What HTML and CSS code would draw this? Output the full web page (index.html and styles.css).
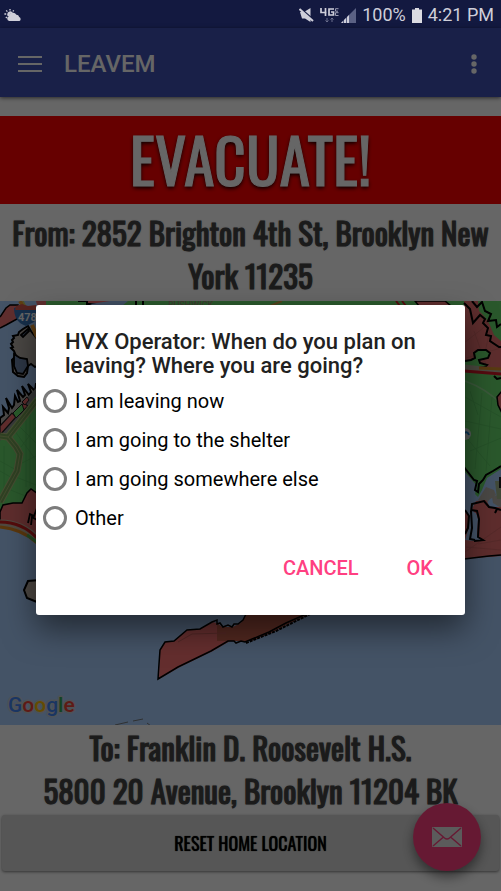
FILE: index.html
```html
<!DOCTYPE html>
<html lang="en">
<head>
<meta charset="utf-8">
<meta name="viewport" content="width=device-width, initial-scale=1">
<title>LEAVEM</title>
<link rel="stylesheet" href="styles.css">
</head>
<body>
<header class="status">
  <svg class="status-weather" viewBox="0 0 18 14" width="18" height="14" aria-hidden="true">
    <g stroke="#cfcfda" stroke-width="1.3" fill="none">
      <path d="M6 1v1.6M2.2 2.4l1.2 1.2M.4 6h1.8M1.8 10l1.2-1M9.8 2.4L8.8 3.4"/>
    </g>
    <path fill="#cfcfda" d="M3.2 6.2a3 3 0 0 1 5.6-1.4C6.500 5 5.400 6.500 5.300 8.400L4 8.500A3 3 0 0 1 3.200 6.200z"/>
    <path fill="#cfcfda" d="M5.200 13a2.300 2.300 0 0 1-.3-4.500 4 4 0 0 1 7.500-1.700 3 3 0 0 1 2.800 2.200A2.200 2.200 0 0 1 15.500 13z"/>
  </svg>
  <div class="status-right">
    <svg viewBox="0 0 15 14" width="15" height="14" aria-hidden="true">
      <path fill="#cfcfda" d="M1 4h4L11.500 0v14L6 10.500H3z"/>
      <path d="M2 1L14 11.500" stroke="#131940" stroke-width="2"/>
      <path d="M.5 1L14 13" stroke="#cfcfda" stroke-width="2"/>
    </svg>
    <svg class="status-net" viewBox="0 0 19 15" width="19" height="15" aria-hidden="true">
      <g fill="none" stroke="#cfcfda" stroke-width="1.700">
        <path d="M1 0v4.500h5.500M5.500 0v8M14 1H9v6h4.500V4H11"/>
      </g>
      <path d="M18.500 .7h-3v2.500h2.500M18.500 4.700h-3v2.800h3" fill="none" stroke="#9a9cb2"/>
      <path d="M7 10v4M5.500 12.500L7 14l1.500-1.500M12 14v-4M10.500 11.500L12 10l1.500 1.500" fill="none" stroke="#6a6e8c"/>
    </svg>
    <svg viewBox="0 0 15 15" width="15" height="15" aria-hidden="true">
      <path fill="#5b6184" d="M15 0v15H0z"/>
      <path fill="#cfcfda" d="M0 15l2-2v2zM3 12l2-2v5H3zM6 9l2-2v8H6z"/>
    </svg>
    <span>100%</span>
    <svg viewBox="0 0 10 15" width="10" height="15" aria-hidden="true"><path fill="#dcdce2" d="M3 0h4v1.500h3V15H0V1.500h3z"/></svg>
    <span>4:21 PM</span>
  </div>
</header>
<div class="screen">
  <nav class="toolbar">
    <button class="icon-button" type="button" aria-label="Menu">
      <svg viewBox="0 0 24 16" width="24" height="16"><path d="M0 1h24M0 8h24M0 15h24" stroke="#fff" stroke-width="2"/></svg>
    </button>
    <h1>LEAVEM</h1>
    <button class="icon-button" type="button" aria-label="More options">
      <svg viewBox="0 0 6 20" width="6" height="20" fill="#fff"><circle cx="3" cy="3" r="2.700"/><circle cx="3" cy="10" r="2.700"/><circle cx="3" cy="17" r="2.700"/></svg>
    </button>
  </nav>
  <main class="content">
    <p class="banner">EVACUATE!</p>
    <p class="place place-from">From: 2852 Brighton 4th St, Brooklyn New York 11235</p>
    <div class="map">
      <svg viewBox="0 0 501 424" preserveAspectRatio="xMidYMid slice" role="img" aria-label="Evacuation zone map">
        <rect width="501" height="424" fill="#abcfff"/>
        <path d="M42 0H501V6H42z" fill="#69dd6e"/>
        <path d="M78 0h9v3h22l15-3M136 0v5M143 0v5" stroke="#000" stroke-width="2" fill="#fa7070"/>
        <path d="M90 3l20-3h18l-6 5H94z" fill="#9fc3f5"/>
        <text x="168" y="7" font-size="9" fill="#a7887b">BUSHWICK</text>
        <path d="M270 5l12-5" stroke="#d8a347" stroke-width="2"/>
        <path d="M396 0l4 5M402 0l4 5" stroke="#d61b28" stroke-width="2"/>
        <path d="M415 0h30l6 5h-32z" fill="#ee7474" stroke="#000" stroke-width="1.500"/>
        <!-- western shore -->
        <path d="M0 16L6 7l4-3 8 0-1 14L6 24 0 27" fill="#ee7474" stroke="#000" stroke-width="1.500"/>
        <path d="M36 0h10v8H38z" fill="#ee7474"/>
        <path d="M12 39l2-2-1-2 5-1 1-3 4-3 5-3 3 5 3 4 4 5v26l-3 1-4-3-3 2-1 7-3 4-6-1-5-4-1-12 4-4-2-5-3-3 2-1-2-3 2-2z" fill="#bcb3ad" stroke="#000" stroke-width="2"/>
        <path d="M21 34l7-6 1 2-6 6zM14 53l6 4 7 1 1 7-5 8-6-1-3-7z" fill="#7189b0" stroke="#000" stroke-width="1.800"/>
        <path d="M20 0l5 8M32 24l5 12" stroke="#ee9c2e" stroke-width="4"/>
        <path d="M23 0l4 8" stroke="#c6d063" stroke-width="1.500"/>
        <path d="M0 117l4-3-1-8 5 6 1-5-3-10 6 10 2-3 1-9 3 6 2-1-3-11 6 7 2-2-3-9 7 9 2-3-3-8 7 7 1-8v35L0 138z" fill="#b9b4b0" stroke="#000" stroke-width="2"/>
        <path d="M0 127L36 87v18L0 143z" fill="#8d8f91"/>
        <path d="M0 125l12-13 4 4L0 134zM17 110l7-8 4 3-8 8z" fill="#f07272" stroke="#222" stroke-width="1.200"/>
        <path d="M13 112l9-9 2 6-8 8z" fill="#69e56e" stroke="#222"/>
        <path d="M22 101l5-5 2 3-4 5z" fill="#f07272" stroke="#222"/>
        <path d="M0 140L37 94v102L0 211z" fill="#69dd6e"/>
        <g stroke="#5cc763" stroke-width=".8" fill="none"><path d="M18 124l18 18M14 129l22 30M21 146l15-20M20 163l16-8M16 176l20 8M8 188l20 8M26 116v70M30 110v75M0 160l18 10M0 170l14 8M4 145v43"/></g>
        <path d="M37 99L23 117 8 136l-8-1M8 136l8 10 4 7-3 17L0 201" fill="none" stroke="#b0bd7c" stroke-width="7"/>
        <path d="M37 99L23 117 8 136l-8-1M8 136l8 10 4 7-3 17L0 201" fill="none" stroke="#77a458" stroke-width="5"/>
        <path d="M37 99L23 117 8 136l-8-1M8 136l8 10 4 7-3 17L0 201" fill="none" stroke="#a5b972"/>
        <path d="M0 211l3-7 10-2h9l5-10 4-4 7 5v44l-11-7-15-6-12-3z" fill="#ea7070" stroke="#000" stroke-width="1.500"/>
        <path d="M28 222l2-9 4 2 3-8M31 224l1-8 5 3" fill="none" stroke="#000" stroke-width="1.800"/>
        <path d="M0 222q22 0 37 16" fill="none" stroke="#c5b6a1" stroke-width="7"/>
        <path d="M0 221q22 0 37 16" fill="none" stroke="#d22020" stroke-width="3"/>
        <path d="M0 226q22 2 37 16" fill="none" stroke="#e18b22" stroke-width="3"/>
        <path d="M27 234l10 7" stroke="#59b956" stroke-width="3"/>
        <path d="M40 279l-12 1-4 9 3 8 10 4" fill="#c0b4a7" stroke="#000" stroke-width="2"/>
        <path d="M14 7l8-3 7 3 8-2q3 10-3 16l-8 4q-12-4-12-18z" fill="#3875bc"/>
        <path d="M16 5l6-2 6 2 8-1v5H15z" fill="#d8584f"/>
        <text x="18" y="20" font-size="11" font-weight="700" fill="#fff">478</text>
        <!-- eastern shore -->
        <path d="M464 0h37v68l-37-1z" fill="#e87272"/>
        <g stroke="#cf6664" stroke-width=".8" fill="none"><path d="M464 42l28-22M466 57l35-10M474 30l12 34M490 28l-8 38"/></g>
        <path d="M478 0h23v40l-7-6-5-12-5-7-5-5z" fill="#69dd6e"/>
        <path d="M464 2l6 6 3 14 7-8 5 4-2 4 5 5-2 7 5 1-1 5 9 6h2M472 0l5 6 5-5 3 9 6 3-3 7 8-1 1 7 4-3" fill="none" stroke="#000" stroke-width="2"/>
        <path d="M465 60l6-1 4-2-1-5 4-3 8 0 4 3-2 5-9 2 1 3 7 2-2 2-20 1" fill="#69dd6e" stroke="#000" stroke-width="2"/>
        <path d="M464 70h37v98l-14 9-5 12-4 7-3-3 2-8-13-15z" fill="#69dd6e"/>
        <path d="M465 80q22 8 36 23" fill="none" stroke="#94dd93" stroke-width="1.500"/>
        <g stroke="#5cc763" stroke-width=".8" fill="none"><path d="M465 96l36 20M465 120l36 8M470 150l31-13M482 92l-7 76M492 96l-6 74M465 135l25 30M470 90l8 24"/></g>
        <path d="M464 166l10 13 3 1-2 9 3 2 1-8 4-4 3-5 7-4 8-5" fill="none" stroke="#000" stroke-width="2"/>
        <path d="M464 67l37 4" stroke="#bcb39f" stroke-width="7"/>
        <path d="M479 67l22 1" stroke="#dd922c" stroke-width="3"/>
        <path d="M464 70l37 3" stroke="#d61b28" stroke-width="3"/>
        <path d="M494 75l3 3 4-1" fill="none" stroke="#000" stroke-width="2"/>
        <path d="M502 90l-5 6 1 8 4 8" fill="#e87272" stroke="#000" stroke-width="1.500"/>
        <circle cx="465" cy="133" r="6" fill="#dbe3e4"/><path d="M463 133q4-4 6 1" stroke="#1682d1" stroke-width="2" fill="none"/>
        <path d="M478 199l8-13 8 3 2 5-7 5-3 5zM492 196l9-3v14l-8-5z" fill="#b8b5ad"/>
        <path d="M495 180h6v18h-4z" fill="#a3b68e"/><path d="M500 176v11" stroke="#222" stroke-width="2"/>
        <path d="M464 257v-47l5 5v11l-4 13 9 1 9-1-7-5 1-19-5-7 4-8 10-1 4 7h11v50z" fill="#ea7070"/>
        <path d="M471 211l5 1 2 6-1 17 1 4-8-1-1-12z" fill="#abcfff"/>
        <g stroke="#cf6664" stroke-width=".8" fill="none"><path d="M465 251l36-25M478 243l23-4M466 246l35 3"/></g>
        <path d="M465 209l4 6-1 12-3 6M471 211l1-8 12-3 5 6 6 1 6 2M471 209l6 1 2 8-1 18 5 3-9 1M471 210l1 17-2 11 5 1M497 208l-2 4" fill="none" stroke="#000" stroke-width="2"/>
        <path d="M464 259l25-3 12-1v10h-37z" fill="#abcfff"/>
        <path d="M464 258l25-3 12-1" fill="none" stroke="#000" stroke-width="1.500"/>
        <!-- southern peninsula -->
        <path d="M159 378l1-29 5-8 9-1 13-11 13-1 13-7 4 1 5 4 11 0 8-4 5-8h62l-18 8-17 9-22 9h-21l-17 10-33 16z" fill="#fa7374"/>
        <path d="M217 322l5 4h11l8-4 5-8h62l-18 8-17 9-22 9h-34z" fill="#ce6452"/>
        <path d="M178 341l14-8 34-1" fill="none" stroke="#cc625e"/>
        <path d="M246 313l-3 6-5 4-4 0-2 3-4-2-5 2-3-4-3 1 0-4-5 2-12 7-13 1-13 11-9 1-5 8-1 14-1 15 20-12 33-16 17-10h6l2 2 5-2 4 1 24-10 17-9 18-8 18-7" fill="none" stroke="#000" stroke-width="1.500"/>
        <path d="M246 342l30-12 34-17" fill="none" stroke="#000" stroke-width="2" stroke-dasharray="3 1"/>
        <path d="M115 424l13-3M133 420l10-2M147 422l4 3" stroke="#777a7d"/>
        <text class="map-credit" x="8" y="411"><tspan fill="#4285f4">G</tspan><tspan fill="#ea4335">o</tspan><tspan fill="#fbbc05">o</tspan><tspan fill="#4285f4">g</tspan><tspan fill="#34a853">l</tspan><tspan fill="#ea4335">e</tspan></text>
      </svg>
    </div>
    <p class="place place-to">To: Franklin D. Roosevelt H.S.<br>5800 20 Avenue, Brooklyn 11204 BK</p>
    <button class="reset" type="button">RESET HOME LOCATION</button>
  </main>
  <button class="fab" type="button" aria-label="Send message">
    <svg viewBox="0 0 30 20" width="30" height="20">
      <rect width="30" height="20" rx="1" fill="#e4e4e4"/>
      <path d="M1 1l11.500 10q2.500 2 5 0L29 1M1 19l10.500-9M29 19l-10.500-9" fill="none" stroke="#ff4081" stroke-width="1.500"/>
    </svg>
  </button>
  <div class="scrim">
    <form class="dialog" role="dialog" aria-labelledby="question">
      <h2 id="question">HVX Operator: When do you plan on leaving? Where you are going?</h2>
      <label class="option"><input type="radio" name="plan">I am leaving now</label>
      <label class="option"><input type="radio" name="plan">I am going to the shelter</label>
      <label class="option"><input type="radio" name="plan">I am going somewhere else</label>
      <label class="option"><input type="radio" name="plan">Other</label>
      <div class="actions">
        <button type="button">CANCEL</button>
        <button type="button">OK</button>
      </div>
    </form>
  </div>
</div>
</body>
</html>
```
FILE: styles.css
```css
* {
  box-sizing: border-box;
}

body {
  margin: 0;
  min-height: 100vh;
  display: flex;
  flex-direction: column;
  font-family: Roboto, "Liberation Sans", sans-serif;
  background: #fff;
}

h1, h2, p {
  margin: 0;
}

button {
  border: 0;
  padding: 0;
  background: none;
  font-family: inherit;
}

svg {
  display: block;
}

.status {
  display: flex;
  align-items: center;
  justify-content: space-between;
  height: 28px;
  padding: 2px 7px 0 4px;
  background: #131940;
  color: #cfcfda;
  font-size: 18px;
}

.status-right {
  display: flex;
  align-items: center;
  gap: 6px;
}

.status-right span {
  line-height: 24px;
}

.status-net {
  margin-right: -4px;
}

.screen {
  position: relative;
  flex: 1;
  display: flex;
  flex-direction: column;
}

.toolbar {
  display: flex;
  align-items: center;
  height: 69px;
  padding: 2px 24px 0 18px;
  background: #3f51b5;
  color: #fff;
  box-shadow: 0 1px 4px rgba(0, 0, 0, 0.6);
}

.toolbar h1 {
  flex: 1;
  margin-left: 22px;
  font-size: 24px;
  font-weight: 500;
}

.content {
  flex: 1;
  display: flex;
  flex-direction: column;
  padding: 19px 0 20px;
}

.banner,
.place,
.reset {
  font-family: Oswald, "Liberation Sans Narrow", "Roboto Condensed", "Liberation Sans", sans-serif;
  font-weight: 400;
  text-align: center;
}

.banner {
  padding-bottom: 4px;
  background: #f00;
  color: #fff;
  font-size: 62px;
  line-height: 84px;
  text-shadow: 0 2px 4px #000;
  -webkit-text-stroke: 1px #fff;
}

.place {
  color: #444;
  font-size: 31px;
  line-height: 43px;
  text-shadow: 0 0 2px rgba(0, 0, 0, 0.5);
  -webkit-text-stroke: 1px #444;
}

.place-from {
  padding: 7px 8px 4px;
}

.place-to {
  padding: 1px 8px 3px;
}

.map {
  position: relative;
  flex: 1;
  min-height: 240px;
}

.map svg {
  position: absolute;
  inset: 0;
  width: 100%;
  height: 100%;
}

.map-credit {
  font-size: 21px;
  font-weight: 500;
  stroke: #c4ccd6;
  stroke-width: 3px;
  stroke-linejoin: round;
  paint-order: stroke;
}

.reset {
  height: 56px;
  margin: 0 2px;
  border-radius: 3px;
  background: #d7d7d7;
  color: #000;
  font-size: 18px;
  text-shadow: 0 0 1px #000;
  box-shadow: 0 1px 3px rgba(0, 0, 0, 0.5);
}

.fab {
  position: absolute;
  right: 20px;
  bottom: 20px;
  display: grid;
  place-items: center;
  width: 68px;
  height: 68px;
  border-radius: 50%;
  background: #ff4081;
  box-shadow: 0 6px 12px rgba(0, 0, 0, 0.45);
}

.scrim {
  position: absolute;
  inset: 0;
  display: grid;
  align-items: center;
  padding: 0 36px;
  background: rgba(0, 0, 0, 0.6);
}

.dialog {
  padding: 25px 24px 23px 7px;
  border-radius: 3px;
  background: #fff;
  box-shadow: 0 14px 32px rgba(0, 0, 0, 0.5);
}

.dialog h2 {
  margin-left: 22px;
  padding-bottom: 4px;
  color: #212121;
  font-size: 22px;
  font-weight: 500;
  line-height: 24px;
}

.option {
  display: flex;
  align-items: center;
  gap: 8px;
  height: 39px;
  font-size: 20px;
}

.option input {
  appearance: none;
  width: 24px;
  height: 24px;
  margin: 0;
  border: 3px solid #7c7c7c;
  border-radius: 50%;
}

.option input:checked {
  border-color: #ff4081;
  background: radial-gradient(#ff4081 50%, transparent 55%);
}

.actions {
  display: flex;
  justify-content: flex-end;
  gap: 32px;
  padding: 6px 8px 0 0;
}

.actions button {
  height: 48px;
  padding: 0 8px;
  color: #ff4081;
  font-size: 20px;
  font-weight: 500;
}

.actions button:last-child {
  padding-right: 0;
}
```
